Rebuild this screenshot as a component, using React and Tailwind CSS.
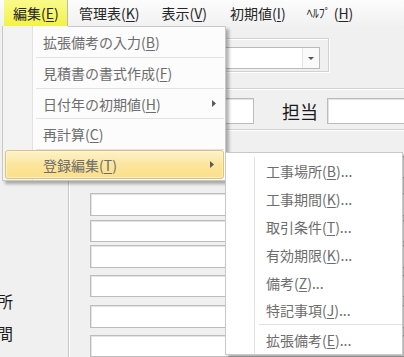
const Arrow = () => (
  <svg width="4" height="7" viewBox="0 0 4 7" className="ml-auto mr-[9px] shrink-0">
    <path d="M0 0L4 3.5L0 7Z" fill="#5a5a5a" />
  </svg>
);

const Acc = ({ t, k, dots }) => (
  <span className="whitespace-nowrap">
    {t}(<u className="underline-offset-2">{k}</u>){dots ? '...' : ''}
  </span>
);

function Row({ h, gutter = 'w-[30px] bg-[#f3f3f3]', pl = 'pl-[10px]', children }) {
  return (
    <div className={`flex ${h}`}>
      <div className={`${gutter} shrink-0 border-r border-[#e2e2e2]`} />
      <div className={`flex flex-1 items-center ${pl}`}>{children}</div>
    </div>
  );
}

function Sep({ gutter = 'w-[30px] bg-[#f3f3f3]', ml = 'ml-[3px]', mr = 'mr-[1px]' }) {
  return (
    <div className="flex h-px">
      <div className={`${gutter} shrink-0 border-r border-[#e2e2e2]`} />
      <div className={`flex-1 bg-[#e2e2e2] ${ml} ${mr}`} />
    </div>
  );
}

const Box = ({ mt }) => (
  <div className={`${mt} ml-[20px] h-[25px] w-[330px] border border-[#bcbcbc] bg-white shadow-[inset_1px_1px_0_#e4e4e4]`} />
);

const Etched = ({ mt }) => <div className={`${mt} border-t border-b border-t-[#d2d2d2] border-b-white`} />;

export default function App() {
  return (
    <div className="relative h-[357px] w-[404px] overflow-hidden bg-[#f0f0f0] font-['Noto_Sans_CJK_JP',sans-serif] text-[14px] leading-none">
      {/* menu bar */}
      <div className="flex h-[26px] items-stretch bg-gradient-to-b from-[#fcfcfc] to-[#f1f1f1] text-[#262626]">
        <div className="ml-[4px] flex w-[64px] items-center border-r border-[#b8b8b8] bg-gradient-to-b from-[#fafa8a] to-[#f2f244] pl-[9px]">
          <Acc t="編集" k="E" />
        </div>
        <div className="ml-[11px] flex items-center">
          <Acc t="管理表" k="K" />
        </div>
        <div className="ml-[22px] flex items-center">
          <Acc t="表示" k="V" />
        </div>
        <div className="ml-[23px] flex items-center">
          <Acc t="初期値" k="I" />
        </div>
        <div className="ml-[21px] flex items-center">
          <span className="text-[12px]">ﾍﾙﾌﾟ</span>
          <span className="ml-[3px]">
            (<u className="underline-offset-2">H</u>)
          </span>
        </div>
      </div>

      {/* form behind the menus */}
      <div className="flex h-[331px]">
        <div className="flex w-[69px] shrink-0 flex-col border-r border-[#c6c6c6] text-[16px] text-[#1a1a1a]">
          <div className="mt-[266px] flex h-[18px] w-[13px] items-center justify-end whitespace-nowrap">工事場所</div>
          <div className="mt-[14px] flex h-[18px] w-[13px] items-center justify-end whitespace-nowrap">工事期間</div>
        </div>
        <div className="flex flex-1 flex-col border-l border-white">
          <div className="ml-[10px] mt-[12px] h-[38px] w-[249px] border border-[#d0d0d0] shadow-[1px_1px_0_white,inset_1px_1px_0_white]">
            <div className="ml-[20px] mr-[8px] mt-[8px] flex h-[22px] border border-[#bababa] bg-white">
              <div className="ml-auto flex w-[17px] items-center justify-center border-l border-[#e4e4e4] bg-[#fafafa]">
                <svg width="6" height="3" viewBox="0 0 6 3">
                  <path d="M0 0H6L3 3Z" fill="#555" />
                </svg>
              </div>
            </div>
          </div>
          <Etched mt="mt-[16px]" />
          <div className="mt-[8px] flex h-[26px] items-center">
            <div className="ml-[20px] h-[26px] w-[164px] border border-[#bcbcbc] bg-white shadow-[inset_1px_1px_0_#e4e4e4]" />
            <span className="ml-[28px] text-[18px] text-[#1a1a1a]">担当</span>
            <div className="ml-[9px] h-[26px] flex-1 border border-r-0 border-[#bcbcbc] bg-white shadow-[inset_1px_1px_0_#e4e4e4]" />
          </div>
          <Etched mt="mt-[5px]" />
          <Box mt="mt-[25px]" />
          <Box mt="mt-[15px]" />
          <Box mt="mt-[4px]" />
          <Box mt="mt-[3px]" />
          <Box mt="mt-[7px]" />
          <Box mt="mt-[8px]" />
          <Box mt="mt-[7px]" />
        </div>
      </div>

      {/* 編集 popup */}
      <div className="absolute left-[2px] top-[26px] w-[224px] border-x border-b border-[#c8c8c8] bg-[#fcfcfc] text-[#6d6d6d] shadow-[3px_3px_3px_rgba(0,0,0,0.3)]">
        <div className="flex h-px">
          <div className="w-[30px] shrink-0 border-r border-[#e2e2e2] bg-[#f3f3f3]" />
          <div className="ml-[35px] flex-1 bg-[#c8c8c8]" />
        </div>
        <Row h="h-[30px]">
          <Acc t="拡張備考の入力" k="B" />
        </Row>
        <Sep />
        <Row h="h-[30px]">
          <Acc t="見積書の書式作成" k="F" />
        </Row>
        <Sep />
        <Row h="h-[29px]">
          <Acc t="日付年の初期値" k="H" />
          <Arrow />
        </Row>
        <Sep />
        <Row h="h-[30px]">
          <Acc t="再計算" k="C" />
        </Row>
        <Sep />
        <div className="relative flex h-[30px]">
          <div className="w-[30px] shrink-0 border-r border-[#e2e2e2] bg-[#f3f3f3]" />
          <div className="absolute inset-x-[1px] bottom-[1px] left-[2px] top-0 flex items-center rounded-[3px] border border-[#e6c165] bg-gradient-to-b from-[#fdf2cb] via-[#fce59c] to-[#fbe08a] pl-[37px] shadow-[inset_0_0_0_1px_rgba(255,255,255,0.5)]">
            <Acc t="登録編集" k="T" />
            <Arrow />
          </div>
        </div>
      </div>

      {/* 登録編集 submenu */}
      <div className="absolute left-[225px] top-[152px] w-[178px] border border-[#c8c8c8] bg-white pt-[4px] text-[#6d6d6d] shadow-[3px_3px_3px_rgba(0,0,0,0.3)]">
        <Row h="h-[28px]" gutter="w-[29px] bg-white" pl="pl-[11px]">
          <Acc t="工事場所" k="B" dots />
        </Row>
        <Row h="h-[28px]" gutter="w-[29px] bg-white" pl="pl-[11px]">
          <Acc t="工事期間" k="K" dots />
        </Row>
        <Row h="h-[28px]" gutter="w-[29px] bg-white" pl="pl-[11px]">
          <Acc t="取引条件" k="T" dots />
        </Row>
        <Row h="h-[28px]" gutter="w-[29px] bg-white" pl="pl-[11px]">
          <Acc t="有効期限" k="K" dots />
        </Row>
        <Row h="h-[28px]" gutter="w-[29px] bg-white" pl="pl-[11px]">
          <Acc t="備考" k="Z" dots />
        </Row>
        <Row h="h-[26px]" gutter="w-[29px] bg-white" pl="pl-[11px]">
          <Acc t="特記事項" k="J" dots />
        </Row>
        <Row h="h-px" gutter="w-[29px] bg-white" />
        <Sep gutter="w-[29px] bg-white" ml="ml-[4px]" mr="mr-0" />
        <Row h="h-px" gutter="w-[29px] bg-white" />
        <Row h="h-[28px]" gutter="w-[29px] bg-white" pl="pl-[11px]">
          <Acc t="拡張備考" k="E" dots />
        </Row>
      </div>
    </div>
  );
}
